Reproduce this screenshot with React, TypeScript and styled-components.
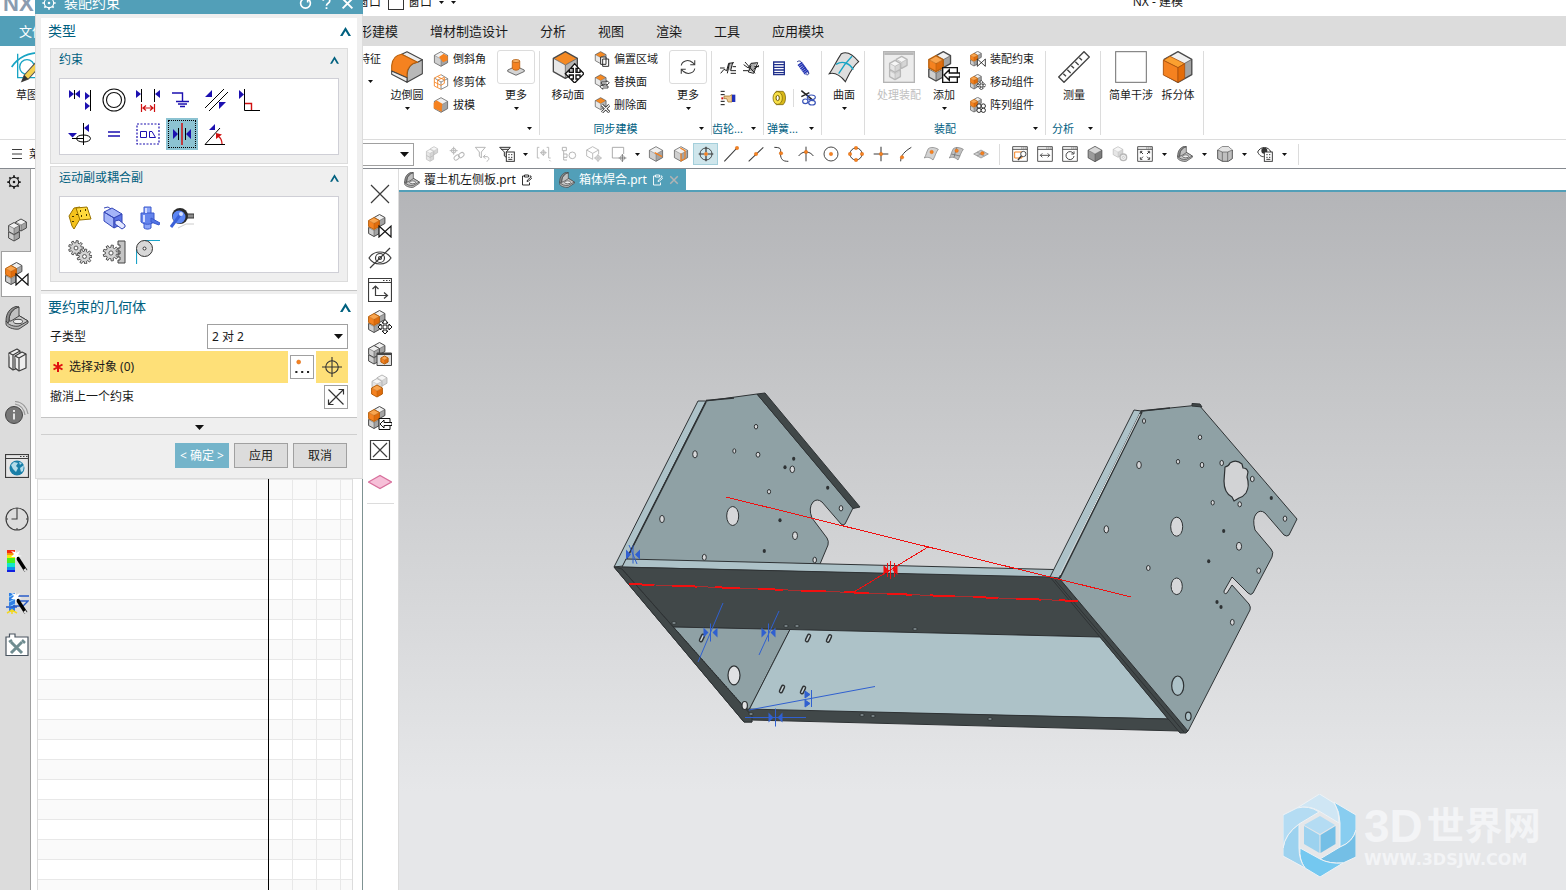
import React from 'react';
import styled, { createGlobalStyle, css } from 'styled-components';

const c = {
  teal: '#529fb8',
  tealText: '#00607f',
  bar: '#dcdcdc',
  panel: '#efefef',
  line: '#dcdcdc',
  ink: '#1a1a1a',
  icon: '#3c3c3c',
  navy: '#1c10b0',
  orange: '#f58220',
  yellow: '#fee078',
  border: '#a0a0a0',
};

const Global = createGlobalStyle`
  *, *::before, *::after { box-sizing: border-box; }
  body {
    margin: 0;
    overflow: hidden;
    background: #fff;
    color: ${c.ink};
    font-family: "Noto Sans", "Noto Sans CJK SC", sans-serif;
    font-size: 12px;
    line-height: 16px;
  }
  button, select { font: inherit; color: inherit; }
  button { padding: 0; border: 0; background: none; white-space: nowrap; }
  svg { display: block; flex: none; }
`;

/* ------------------------------------------------------------------ icons */

type CubeProps = { x: number; y: number; r: number; tone?: 'gray' | 'orange' | 'pale' | 'cap' | 'dark' };

const tones = {
  gray: ['#f0f0f0', '#cfcfcf', '#a4a4a4', '#4a4a4a'],
  orange: ['#f9a54f', '#f58220', '#e06c0c', '#b8600c'],
  cap: ['#f58a24', '#e8e8e8', '#b4b4b4', '#4a4a4a'],
  pale: ['#f6f6f6', '#e6e6e6', '#d6d6d6', '#b8b8b8'],
  dark: ['#d8d8d8', '#9c9c9c', '#7c7c7c', '#333'],
};

const Cube = ({ x, y, r, tone = 'gray' }: CubeProps) => {
  const w = r * 0.9;
  const h = r / 2;
  const [top, left, right, edge] = tones[tone];
  return (
    <g strokeLinejoin="round">
      <path fill={top} d={`M${x} ${y - r}L${x + w} ${y - h}L${x} ${y}L${x - w} ${y - h}Z`} />
      <path fill={left} d={`M${x - w} ${y - h}L${x} ${y}V${y + r}L${x - w} ${y + h}Z`} />
      <path fill={right} d={`M${x + w} ${y - h}L${x} ${y}V${y + r}L${x + w} ${y + h}Z`} />
      <path
        fill="none"
        stroke={edge}
        strokeWidth={0.5}
        d={`M${x - w} ${y - h}L${x} ${y}L${x + w} ${y - h}M${x} ${y}V${y + r}`}
      />
      <path
        fill="none"
        stroke={edge}
        strokeWidth={1}
        d={`M${x} ${y - r}L${x + w} ${y - h}V${y + h}L${x} ${y + r}L${x - w} ${y + h}V${y - h}Z`}
      />
    </g>
  );
};

const gearPath = (cx: number, cy: number, ro: number, ri: number, n: number) => {
  const pts: string[] = [];
  const step = (Math.PI * 2) / n;
  for (let i = 0; i < n; i += 1) {
    [[-0.3, ri], [-0.2, ro], [0.2, ro], [0.3, ri]].forEach(([k, r]) => {
      const a = (i + k) * step;
      pts.push(`${(cx + Math.cos(a) * r).toFixed(2)} ${(cy + Math.sin(a) * r).toFixed(2)}`);
    });
  }
  return `M${pts.join('L')}Z`;
};

const Gear = ({ x, y, r, n = 9 }: { x: number; y: number; r: number; n?: number }) => (
  <g stroke="#555" strokeWidth={1}>
    <path fill="#d4d4d4" d={gearPath(x, y, r, r * 0.7, n)} />
    <circle cx={x} cy={y} r={r * 0.26} fill="#fff" />
  </g>
);

const Assembly = () => (
  <>
    <Cube x={11.5} y={6.5} r={6} />
    <Cube x={6} y={16.5} r={6} />
    <Cube x={6} y={9.5} r={6} tone="orange" />
  </>
);

const Cross4 = () => (
  <path
    d="M17 9.5l3 3.5h-2v3h3v-2l3 3-3 3v-2h-3v3h2l-3 3-3-3h2v-3h-3v2l-3-3 3-3v2h3v-3h-2z"
    fill="#fff"
    stroke="#111"
    strokeWidth={1}
  />
);

const Dot = ({ x, y, r = 2.6 }: { x: number; y: number; r?: number }) => (
  <circle cx={x} cy={y} r={r} fill={c.orange} stroke="#d8660c" strokeWidth={0.6} />
);

const WindowFrame = () => (
  <path d="M1 1H23V23H1ZM1 5H23M14 3h1.5M17 3h1.5M20 3h1.5" fill="none" stroke={c.icon} strokeWidth={1.3} />
);

const Shoe = () => (
  <g stroke="#444" strokeWidth={1} strokeLinejoin="round">
    <path fill="#b4b4b4" d="M1 15L13 9L23 15V17L14 23C9 24 1 21 1 18Z" />
    <path fill="#c8c8c8" d="M1 15L13 9L23 15L14 20C9 21 3 19 1 15Z" />
    <path fill="#c0c0c0" d="M4 15C4 8 7 3 14 1V10L6 15Z" />
    <path fill="#8c8c8c" d="M1 15C1 7 5 2 11 0.500L14 1C7 3 4 8 4 15L3 17Z" />
    <ellipse cx={13} cy={15.5} rx={4.5} ry={2.2} fill="#eee" />
  </g>
);

const Sheet = ({ tone = '#d2d2d2' }: { tone?: string }) => (
  <path d="M2 18C5 13 5 9 8 4C12 1 18 2 23 5C19 10 19 14 15 21C11 17 6 16 2 18Z" fill={tone} stroke="#777" strokeWidth={1} />
);

const Wand = () => (
  <>
    <path d="M12 8L21 22" stroke="#000" strokeWidth={3.4} />
    <path d="M19.5 20L21 22.5" stroke="#ddd" strokeWidth={2.5} />
    <path d="M10 0l1 4 4-2-2 4 4 1-5 1-1 4-1-4-4 0 3-3-3-3 4 1z" fill="#fff" />
  </>
);

const icons: Record<string, React.ReactNode> = {
  touch: (
    <g fill={c.navy}>
      <path d="M1 2V10L6 6ZM12 2V10L7 6Z" />
      <path d="M17 4V12L22 8ZM17 14V22L22 18Z" />
      <path d="M6.5 2V11M22.5 2V23" stroke="#000" strokeWidth={1} />
    </g>
  ),
  concentric: (
    <g fill="none" stroke="#111" strokeWidth={1.1}>
      <circle cx={12} cy={12} r={11} />
      <circle cx={12} cy={12} r={7.5} />
    </g>
  ),
  distance: (
    <>
      <path d="M0 2V10L5 6ZM24 2V10L19 6Z" fill={c.navy} />
      <path d="M5.5 1V14M18.5 1V14" stroke="#000" />
      <path d="M5.5 16V24M18.500 16V24M7 20H17M10 17.5L7 20L10 22.5M14 17.5L17 20L14 22.5" stroke="#d01010" fill="none" strokeWidth={1.2} />
    </>
  ),
  ground: (
    <>
      <path d="M2 5H12.5V13" fill="none" stroke={c.navy} strokeWidth={1.4} />
      <path d="M6 13.5H19M8 16H17M10 18.5H15" stroke={c.navy} strokeWidth={1.5} />
    </>
  ),
  parallel: (
    <>
      <path d="M1 20L20 1M5 23L24 4" stroke="#000" />
      <path d="M1 9H8V2ZM15 14H22L15 21Z" fill={c.navy} />
    </>
  ),
  perpendicular: (
    <>
      <path d="M1 2V11L6 6.5Z" fill={c.navy} />
      <path d="M7 15.5H13.5V22" fill="none" stroke="#d01010" strokeWidth={1.4} />
      <path d="M6.5 1V22.5H22" fill="none" stroke="#000" />
    </>
  ),
  align: (
    <>
      <path d="M0 11H9L4.5 15.5ZM16 6L21 2V10Z" fill={c.navy} />
      <path d="M15.5 1V23M4 16.5H16" stroke="#000" />
      <ellipse cx={15.5} cy={16.5} rx={7} ry={3.5} fill="none" stroke="#000" />
    </>
  ),
  equal: <path d="M6 10H18M6 14H18" stroke={c.navy} strokeWidth={1.5} />,
  fit: (
    <g fill="none" stroke={c.navy}>
      <path d="M1 2H23V22H1Z" strokeDasharray="2 1.5" strokeWidth={1.2} />
      <path d="M4.5 9.5H10.5V15.5H4.5ZM13.5 15.5V9.5H16L19.5 15.5Z" />
    </g>
  ),
  center: (
    <>
      <path d="M3 7V17L8 12ZM21 7V17L16 12Z" fill={c.navy} />
      <path d="M8.5 6V18M15.500 6V18" stroke="#000" />
      <path d="M12 1V23" stroke="#d01010" strokeWidth={1.5} />
    </>
  ),
  angle: (
    <>
      <path d="M5 8H11V2Z" fill={c.navy} />
      <path d="M16 6L1 22.5H21" fill="none" stroke="#000" />
      <path d="M14 14C17 16 18 18 18 22" fill="none" stroke="#d01010" strokeWidth={1.3} />
      <path d="M12 17V11L18 12.5Z" fill="#d01010" />
    </>
  ),
  hinge: (
    <g stroke="#9a7400" strokeWidth={1}>
      <path d="M1 10L6 2L12 1V13L6 23L4 20Z" fill="#f4c21c" />
      <path d="M8 2L19 1L23 13L12 14Z" fill="#ffda3c" />
      <path d="M12 5h1M17 4h1M13 10h1M18 9h1M5 10v1M5 15v1M9 8v1" stroke="#4a3a00" strokeWidth={2} />
    </g>
  ),
  slider: (
    <g stroke="#3446b8" strokeWidth={1} strokeLinejoin="round">
      <path d="M2 6L10 2L20 8L12 12ZM2 6V15L12 22V12Z" fill="#a4b4f8" />
      <path d="M2 2L6 1L9 3" fill="none" />
      <path d="M12 12L20 8V18L12 22Z" fill="#5c74e4" />
      <path d="M13 15L17 14L23 19V21L20 23L13 18Z" fill="#e4e8ff" />
    </g>
  ),
  cylindrical: (
    <g stroke="#3a58cc" strokeWidth={1}>
      <path d="M8 1H15V22C13 23.5 10 23.5 8 22Z" fill="#8aa4f8" />
      <path d="M5 7H18V16C14 19 9 19 5 16Z" fill="#6484ec" />
      <path d="M15 12L24 17L23 19L15 16Z" fill="#5274e4" />
      <path d="M10 2V7M8 9V16" stroke="#d4dcff" strokeWidth={2} />
    </g>
  ),
  ball: (
    <>
      <path d="M14 8H24V12H14Z" fill="#8c8c8c" stroke="#333" />
      <circle cx={10} cy={10} r={8} fill="#2a2a2a" />
      <circle cx={9} cy={11} r={6.5} fill="#5c86f4" />
      <path d="M1 21L10 9" stroke="#3a60d8" strokeWidth={3} />
      <circle cx={11} cy={8} r={2} fill="#d4e0ff" />
      <path d="M8 22L16 18H24" stroke="#ccc" fill="none" />
    </>
  ),
  gears: (
    <>
      <Gear x={8} y={8} r={7.5} />
      <Gear x={16.5} y={16.5} r={7.5} />
    </>
  ),
  rack: (
    <>
      <Gear x={9} y={13} r={8} />
      <path d="M18 1H23V23H16V20H18V17H16V14H18V11H16V8H18V5H16V1Z" fill="#c4c4c4" stroke="#444" />
    </>
  ),
  pulley: (
    <>
      <path d="M0.5 24V9M8 0.5H24" stroke="#1aa3c8" strokeWidth={1.2} />
      <circle cx={8.5} cy={8.5} r={8} fill="#d8d8d8" stroke="#333" />
      <circle cx={8.5} cy={8.5} r={1.5} fill="#fff" stroke="#333" />
    </>
  ),
  gearOutline: (
    <g fill="none" stroke="currentColor" strokeWidth={2}>
      <circle cx={12} cy={12} r={8} />
      <circle cx={12} cy={12} r={1.2} />
      <path
        d="M12 0.500V4M12 20V23.500M0.500 12H4M20 12H23.500M4 4L6.300 6.300M17.700 17.700L20 20M20 4L17.700 6.300M6.300 17.700L4 20"
        strokeWidth={3}
      />
    </g>
  ),
  partsGray: (
    <>
      <Cube x={16} y={7} r={6} />
      <Cube x={9} y={17} r={6} />
      <Cube x={9} y={10.5} r={6} />
    </>
  ),
  assembly: <Assembly />,
  assemblyPale: (
    <>
      <rect x={0.5} y={0.5} width={23} height={23} fill="#ececec" stroke="#b4b4b4" strokeWidth={1} />
      <path d="M1 1H23V3H1Z" fill="#b8b8b8" />
      <Cube x={14} y={8.5} r={4.5} tone="pale" />
      <Cube x={9} y={17} r={4.5} tone="pale" />
      <Cube x={9} y={11.5} r={4.5} tone="pale" />
    </>
  ),
  assemblyConstraint: (
    <>
      <Assembly />
      <path d="M11 12L23 23V12L11 23Z" fill="#fff" stroke="#111" strokeWidth={1.2} />
    </>
  ),
  assemblyMove: (
    <>
      <Assembly />
      <Cross4 />
    </>
  ),
  assemblyAdd: (
    <>
      <Assembly />
      <path d="M11 12.5H22V23.5H11Z" fill="#fff" stroke="#111" />
      <path d="M12 18L16 14V16.5H24V19.5H16V22Z" fill="#fff" stroke="#111" />
    </>
  ),
  assemblyPattern: (
    <>
      <Assembly />
      <g fill="#fff" stroke="#111" strokeWidth={1.3}>
        <circle cx={13.5} cy={13.5} r={3.2} />
        <circle cx={20} cy={13.5} r={3.2} />
        <circle cx={13.5} cy={20} r={3.2} />
        <circle cx={20} cy={20} r={3.2} />
      </g>
    </>
  ),
  assemblyWindow: (
    <>
      <Cube x={11.5} y={6.5} r={6} />
      <Cube x={6} y={16} r={6} />
      <Cube x={6} y={9.5} r={6} />
      <path d="M9 11H23.5V23.5H9Z" fill="#ddd" stroke="#444" />
      <path d="M9 12H23" stroke="#444" strokeWidth={2} />
      <Cube x={16.5} y={18} r={4} tone="orange" />
    </>
  ),
  assemblyHide: (
    <>
      <Cube x={14} y={6.5} r={5.5} tone="pale" />
      <Cube x={9} y={10} r={5.5} tone="pale" />
      <Cube x={9} y={17} r={6} tone="orange" />
    </>
  ),
  shoe: <Shoe />,
  books: (
    <g fill="#eee" stroke={c.icon} strokeWidth={1.2} strokeLinejoin="round">
      <path d="M4 5L12 1L15 3V19L8 22L4 19Z" />
      <path d="M4 5L8 7V22M8 7L15 3" />
      <path d="M10 8L17 4L21 6V20L14 23L10 20Z" />
      <path d="M10 8L14 10V23M14 10L21 6" />
    </g>
  ),
  info: (
    <>
      <circle cx={9} cy={14} r={8.5} fill="#777" stroke="#444" />
      <path d="M9 12.5V18.5M9 9V11" stroke="#fff" strokeWidth={1.6} />
      <path d="M10 3C16 4 19 8 20 14M10 0.500C18 1 22 7 23 13" fill="none" stroke="#999" strokeWidth={1.2} />
    </>
  ),
  web: (
    <>
      <rect x={0.5} y={0.5} width={23} height={23} fill="#e6e6e6" stroke={c.icon} strokeWidth={1.2} />
      <path d="M1 4.5H23M15 2.5h1.5M18 2.5h1.5M21 2.5h1.5" stroke={c.icon} />
      <circle cx={12} cy={14} r={7.5} fill="#1a7fa8" />
      <path d="M6 11L9 8L13 9L11 12L13 14L11 18L8 15ZM15 14L19 11L18 17L16 18ZM14 8L17 9L15 11Z" fill="#b4dcea" />
    </>
  ),
  clock: (
    <g fill="none" stroke={c.icon} strokeWidth={1.1}>
      <circle cx={12} cy={12} r={11} />
      <path d="M12 3V12H6.500M12 1V3M12 21V23M1 12H3M21 12H23" />
    </g>
  ),
  rainbow: (
    <>
      <path d="M2 1H10V4H2Z" fill="#f42c10" />
      <path d="M2 4H10V6H2Z" fill="#f89010" />
      <path d="M2 6H10V9H2Z" fill="#f4ec10" />
      <path d="M2 9H10V14H2Z" fill="#48f020" />
      <path d="M2 14H10V18H2Z" fill="#10e8c8" />
      <path d="M2 18H10V21H2Z" fill="#1090f0" />
      <path d="M2 21H10V23H2Z" fill="#1020e0" />
      <Wand />
    </>
  ),
  spark: (
    <>
      <path d="M4 2H10V20H4Z" fill="#2f7fe4" />
      <path d="M4 6L10 3M4 11L10 8M4 16L10 13" stroke="#9cd4ff" />
      <path d="M12 5H24M12 10H23L18 15H8M1 16H12" stroke="#2a5cc8" fill="none" strokeWidth={1.3} />
      <path d="M2 22L7 19L12 22M7 18V23" stroke="#f4d820" strokeWidth={1.5} fill="none" />
      <Wand />
    </>
  ),
  toolbox: (
    <>
      <path d="M1 4H4.500V1H10V4H23V22.500H1Z" fill="#fff" stroke="#4a5560" strokeWidth={1.2} />
      <path d="M6 9L17 20M17 9L6 20" stroke="#6f8c90" strokeWidth={3} />
      <path d="M4 9L7 7M17 7L20 10" stroke="#6f8c90" strokeWidth={2.5} />
    </>
  ),
  close: <path d="M3 3L21 21M21 3L3 21" stroke={c.icon} strokeWidth={1.2} />,
  eyeOff: (
    <g fill="none" stroke={c.icon} strokeWidth={1.2}>
      <path d="M1 12C6 4 18 4 23 12C18 20 6 20 1 12Z" />
      <circle cx={12} cy={12} r={4.5} />
      <circle cx={12} cy={12} r={1.5} />
      <path d="M2 22L22 2" />
    </g>
  ),
  axes: (
    <g fill="none" stroke={c.icon} strokeWidth={1.2}>
      <path d="M0.5 0.5H23.5V23.5H0.5ZM0.5 4.5H23.5M15 2.5h1.5M18 2.5h1.5M21 2.5h1.5" />
      <path d="M7.5 8V17.5H19M4.5 11L7.5 8L10.5 11M16 14.5L19.5 17.5L16 20.5" />
    </g>
  ),
  boxX: <path d="M2.5 2.5H21.5V21.5H2.5ZM5 5L19 19M19 5L5 19" fill="none" stroke={c.icon} strokeWidth={1.2} />,
  plane: <path d="M0.5 12L12 5.5L23.5 12L12 18.5Z" fill="#f6c0d8" stroke="#d8709c" strokeWidth={1.2} />,
  edgeBlend: (
    <g stroke="#444" strokeWidth={0.8} strokeLinejoin="round">
      <path fill="#ececec" d="M8 2.5L12 0.5L23.5 6.5L20 9Z" />
      <path fill="#b8b8b8" d="M23.5 6.5V17L12 23.5V18C12 13 15 9 20 8.500Z" />
      <path fill="#f58220" stroke="#b8600c" d="M0.5 15V11C1 6 4 3 8 2.5L20 8.500C15 9 12 13 12 17V20Z" />
      <path fill="#ececec" d="M0.5 15V17.500L12 23.5V20Z" />
    </g>
  ),
  chamfer: (
    <>
      <Cube x={12} y={12} r={11} />
      <path d="M9 9L16 4L22 8V14L15 17Z" fill={c.orange} />
    </>
  ),
  trim: (
    <g fill="none" strokeWidth={1.3}>
      <path d="M12 1L22 7V18L12 23V12L22 7M12 12L2 6" stroke="#777" />
      <path d="M2 6L12 1M2 6V18L12 23M2 12L12 17L17 14V5L7 9V20M7 4L17 9" stroke={c.orange} />
    </g>
  ),
  draft: (
    <>
      <Cube x={12} y={12} r={11} />
      <path d="M1 9L5 5L14 10L13 22L1 17Z" fill={c.orange} />
    </>
  ),
  boss: (
    <>
      <path d="M1 16L12 11L23 16V18L12 23L1 18Z" fill="#d4d4d4" stroke="#444" />
      <path d="M7 4V14C9 17 15 17 17 14V4Z" fill={c.orange} stroke="#b05808" />
      <ellipse cx={12} cy={4} rx={5} ry={2} fill="#fbb468" stroke="#b05808" />
    </>
  ),
  moveFace: (
    <>
      <Cube x={10} y={10.5} r={10} tone="cap" />
      <Cross4 />
    </>
  ),
  offsetFace: (
    <>
      <Cube x={10} y={10} r={9} tone="cap" />
      <path d="M10 9H18V20H10ZM13 12H22V23H13Z" fill="#fff" stroke="#222" strokeWidth={1.4} />
    </>
  ),
  replaceFace: (
    <>
      <Cube x={10} y={10} r={9} tone="cap" />
      <path d="M23 13L19 10V12H11V15H19V17ZM9 19L13 16V18H21V21H13V23Z" fill="#fff" stroke="#222" strokeWidth={1.2} />
    </>
  ),
  deleteFace: (
    <>
      <Cube x={10} y={10} r={9} tone="cap" />
      <path d="M12 12L23 23M23 12L12 23" stroke="#222" strokeWidth={4} />
      <path d="M12 12L23 23M23 12L12 23" stroke="#fff" strokeWidth={1.8} />
    </>
  ),
  refresh: (
    <path d="M3 10C4 4 12 1 18 6L21 9M21 3V9H15M21 14C20 20 12 23 6 18L3 15M3 21V15H9" fill="none" stroke={c.icon} strokeWidth={1.4} />
  ),
  gearPairA: (
    <>
      <path d="M10 16L13 5L19 4L16 15Z" fill="#bbb" />
      <path d="M0 12H7M1 20L6 14L10 16L13 5L21 4M14 5L11 20M19 4L16 16H24M16 20H24M19 10H24" fill="none" stroke="#111" strokeWidth={1.4} />
    </>
  ),
  gearPairB: (
    <>
      <path d="M8 16L12 5L20 4L16 18Z" fill="#aaa" />
      <path d="M1 7L8 12L12 5L22 4L16 20L8 18L12 8M0 16H8M16 14L24 8M3 3L18 20M17 10H24" fill="none" stroke="#111" strokeWidth={1.4} />
    </>
  ),
  gearList: (
    <>
      <path d="M1 2H7M1 7H7M1 17H7M1 22H7" stroke="#111" strokeWidth={1.5} />
      <path d="M2 11H5V14H2Z" fill="#d01010" />
      <path d="M6 9H14L18 7V18H12L10 13H6Z" fill="#ecc890" stroke="#94681c" />
      <path d="M18 7H23V18H18Z" fill="#2030b8" />
    </>
  ),
  springA: <path d="M3 3H21M3 7H21M3 11H21M3 15H21M3 19H21M3 22H21M4 2V23M20 2V23" stroke="#20308c" strokeWidth={1.9} />,
  springB: (
    <>
      <path d="M3 3C6 0 10 2 10 5L20 18C22 20 20 23 17 22" stroke="#20308c" strokeWidth={1.5} fill="none" />
      <path d="M7 5L18 20" stroke="#2334b4" strokeWidth={8} strokeDasharray="2.4 0.6" />
    </>
  ),
  springC: (
    <>
      <path d="M8 2H18C23 5 23 19 18 22H8C3 19 3 5 8 2Z" fill="#d8b818" stroke="#6c5800" />
      <ellipse cx={10} cy={12} rx={7} ry={9.5} fill="#f8e048" stroke="#6c5800" />
      <ellipse cx={10} cy={12} rx={2.5} ry={4} fill="#fff" stroke="#6c5800" strokeWidth={1.5} />
    </>
  ),
  springD: (
    <>
      <path d="M2 1L20 16M2 10L14 4" stroke="#222" strokeWidth={2.2} />
      <g fill="none" stroke="#3a54b8" strokeWidth={1.8}>
        <ellipse cx={17} cy={11} rx={6} ry={3.5} />
        <ellipse cx={8} cy={17} rx={4} ry={3.5} />
        <ellipse cx={18} cy={19} rx={5} ry={3.5} />
      </g>
    </>
  ),
  surface: (
    <>
      <path d="M1 17C4 13 6 8 10 2C14 0 19 3 23 8C18 12 16 17 13 23C9 18 5 16 1 17Z" fill="#dedede" stroke="#333" strokeWidth={0.8} />
      <path d="M8 17C11 12 14 8 18 4M6 10C11 7 16 9 19 14" fill="none" stroke="#18a4c4" strokeWidth={1} />
    </>
  ),
  measure: (
    <>
      <path d="M0.5 19.5L19.5 0.5L23.5 4.5L4.5 23.5Z" fill="#fff" stroke="#444" strokeWidth={1} />
      <path d="M4 17L6 19M7 14L9.5 16.5M10 11L12 13M13 8L15.5 10.5M16 5L18 7" stroke="#444" strokeWidth={1} />
    </>
  ),
  emptyBox: <rect x={0.5} y={0.5} width={23} height={23} fill="#fff" stroke="#777" strokeWidth={0.8} />,
  split: (
    <>
      <Cube x={12} y={12} r={11.5} />
      <g stroke="#a8500c" strokeWidth={0.6} strokeLinejoin="round">
        <path d="M1 7L6 4L17 9.500L12 12.500Z" fill="#fba030" />
        <path d="M1 7L12 12.500V23.500L1 18Z" fill={c.orange} />
        <path d="M17 9.500V20.500L12 23.500V12.500Z" fill="#e46c08" />
      </g>
    </>
  ),
  sketch: (
    <>
      <path d="M0.5 12C5 5 12 1 24 1" fill="none" stroke="#18a4c4" strokeWidth={1.2} />
      <path d="M5 2V20H22" fill="none" stroke="#18a4c4" />
      <circle cx={12} cy={12} r={5.5} fill="none" stroke="#18a4c4" />
      <path d="M8 23L10 18L20 7L23 10L13 21Z" fill="#f4d050" stroke="#555" strokeWidth={0.8} />
      <path d="M8 23L10 18L13 21Z" fill="#333" />
    </>
  ),
  faded: (
    <>
      <Cube x={15} y={7} r={6} tone="pale" />
      <Cube x={9} y={17} r={6} tone="pale" />
      <Cube x={9} y={11} r={6} tone="pale" />
    </>
  ),
  link: (
    <g fill="none" stroke="#b8b8b8" strokeWidth={1.5}>
      <circle cx={7} cy={7} r={3.500} />
      <path d="M7 1V13M1 7H13" />
      <rect x={7} y={14} width={9} height={6} rx={3} transform="rotate(-40 12 17)" />
      <rect x={14} y={11} width={9} height={6} rx={3} transform="rotate(-40 18 14)" />
    </g>
  ),
  filterUndo: (
    <g fill="none" stroke="#b0b0b0" strokeWidth={1.4}>
      <path d="M2 2H17L11 9V18L8 15V9Z" />
      <path d="M14 16H20C24 18 22 22 19 23M17 13L14 16L17 19" />
    </g>
  ),
  filterList: (
    <g fill="none" stroke="#333" strokeWidth={1.5}>
      <path d="M1 2H17L11 9V17L8 15V9ZM3 5H15" />
      <rect x={11} y={9} width={12} height={14} fill="#fff" />
      <path d="M14 13H16M18 13H20M14 17H16M18 17H20M14 20H20" />
    </g>
  ),
  bracket: (
    <g fill="none" stroke="#b8b8b8" strokeWidth={1.4}>
      <path d="M5 2H2V18H5M16 2H19V18H22M11 5V15M6 10H16M20 21L22 23" />
      <circle cx={11} cy={10} r={3} />
    </g>
  ),
  tree: (
    <g fill="none" stroke="#b0b0b0" strokeWidth={1.4}>
      <path d="M2 2H8V7H2ZM4 7V21M4 12H9V17H4M4 21H9" />
      <circle cx={17} cy={14} r={5} />
    </g>
  ),
  cubeTarget: (
    <g fill="none" stroke="#b8b8b8" strokeWidth={1.4}>
      <path d="M10 1L19 6V12M10 1L1 6V15L10 20M1 6L10 11L19 6M10 11V20" />
      <circle cx={18} cy={18} r={3.500} />
      <path d="M18 12V24M12 18H24" />
    </g>
  ),
  rectTarget: (
    <g fill="none" stroke="#a0a0a0" strokeWidth={1.3}>
      <path d="M19 12V2H2V18H11" />
      <circle cx={17} cy={18} r={3.500} />
      <path d="M17 12V24M11 18H23" stroke="#666" />
    </g>
  ),
  cubeLine: (
    <>
      <Cube x={12} y={12} r={11} />
      <path d="M10 10L21 16" stroke={c.orange} strokeWidth={2} />
    </>
  ),
  cubePlane: (
    <>
      <Cube x={12} y={12} r={11} />
      <path d="M11 3L18 7V19L12 22V11" fill="none" stroke={c.orange} strokeWidth={1.8} />
    </>
  ),
  snap: (
    <g fill="none" stroke="#333" strokeWidth={1.3}>
      <circle cx={12} cy={12} r={9} />
      <path d="M12 1V9M12 15V23M1 12H9M15 12H23" strokeWidth={1.8} />
      <Dot x={12} y={12} />
    </g>
  ),
  endPoint: (
    <>
      <path d="M2 23L20 4" stroke={c.icon} strokeWidth={1.6} />
      <Dot x={21} y={3} />
    </>
  ),
  midPoint: (
    <>
      <path d="M1 23L23 2" stroke={c.icon} strokeWidth={1.6} />
      <Dot x={12} y={12} />
    </>
  ),
  control: (
    <>
      <path d="M2 2C16 2 10 8 11 12C12 20 14 23 23 23" fill="none" stroke={c.icon} strokeWidth={1.5} />
      <Dot x={12} y={11} />
    </>
  ),
  intersect: (
    <>
      <path d="M12 1V23M1 15C6 7 18 7 23 15" fill="none" stroke={c.icon} strokeWidth={1.5} />
      <Dot x={12} y={9} />
    </>
  ),
  arcCenter: (
    <>
      <circle cx={12} cy={12} r={10.5} fill="none" stroke={c.icon} strokeWidth={1.4} />
      <Dot x={12} y={12} />
    </>
  ),
  quadrant: (
    <>
      <circle cx={12} cy={12} r={9} fill="none" stroke={c.icon} strokeWidth={1.5} />
      <Dot x={12} y={3} />
      <Dot x={21} y={12} />
      <Dot x={12} y={21} />
      <Dot x={3} y={12} />
    </>
  ),
  point: (
    <>
      <path d="M12 1V23M1 12H23" stroke={c.icon} strokeWidth={1.6} />
      <Dot x={12} y={12} />
    </>
  ),
  onCurve: (
    <>
      <path d="M4 23C4 14 10 8 20 2" fill="none" stroke={c.icon} strokeWidth={1.5} />
      <Dot x={6} y={17} />
    </>
  ),
  onFace: (
    <>
      <Sheet />
      <Dot x={13} y={9} />
    </>
  ),
  boundary: (
    <>
      <Sheet tone="#c0c0c0" />
      <path d="M5 12L18 15M13 2L9 17" stroke="#666" fill="none" />
      <Dot x={13} y={7} />
    </>
  ),
  facet: (
    <>
      <path d="M1 12L12 6L23 12L12 18Z" fill="#c8c8c8" stroke="#888" />
      <path d="M6 9L17 15M17 9L6 15" stroke="#888" />
      <Dot x={14} y={11} />
    </>
  ),
  zoomWindow: (
    <>
      <WindowFrame />
      <path d="M4 9H15V18H4Z" fill="none" stroke={c.orange} strokeWidth={1.5} />
      <circle cx={17} cy={12} r={4} fill="#fff" stroke={c.icon} strokeWidth={1.3} />
      <path d="M14 15L9 21" stroke={c.icon} strokeWidth={2.2} />
    </>
  ),
  panWindow: (
    <>
      <WindowFrame />
      <path d="M5 14H19M8 11L5 14L8 17M16 11L19 14L16 17" fill="none" stroke={c.icon} strokeWidth={1.3} />
    </>
  ),
  rotateWindow: (
    <>
      <WindowFrame />
      <path d="M17 11A6 6 0 1 0 18 15M18 8V12H14" fill="none" stroke={c.icon} strokeWidth={1.4} />
    </>
  ),
  cubeDark: <Cube x={12} y={12} r={11.5} tone="dark" />,
  cubeGear: (
    <>
      <Cube x={9} y={9} r={8} tone="pale" />
      <circle cx={17} cy={17} r={5} fill="#eee" stroke="#b8b8b8" strokeWidth={2} />
      <circle cx={17} cy={17} r={1.5} fill="#fff" stroke="#b8b8b8" />
    </>
  ),
  fitWindow: (
    <>
      <WindowFrame />
      <path d="M5 11V8H8M16 8H19V11M19 17V20H16M8 20H5V17M6 9L9 12M18 9L15 12M18 19L15 16M6 19L9 16" fill="none" stroke={c.icon} strokeWidth={1.5} />
    </>
  ),
  prism: (
    <>
      <path d="M1 6L8 1H17L23 6V19L17 23H8L1 19Z" fill="#c0c0c0" stroke="#333" strokeWidth={1.2} />
      <path d="M1 6L8 1H17L23 6L16 9H8Z" fill="#e4e4e4" />
      <path d="M1 6L8 9H16L23 6M8 9V23M16 9V23" fill="none" stroke="#555" />
    </>
  ),
  eyeList: (
    <>
      <path d="M1 9C5 0 17 0 21 9M1 9C4 15 7 16 10 16" fill="none" stroke="#333" strokeWidth={1.5} />
      <circle cx={11} cy={7} r={4.500} fill="#333" />
      <rect x={11} y={9} width={12} height={14} fill="#fff" stroke="#333" strokeWidth={1.4} />
      <path d="M14 13H16M18 13H20M14 17H16M18 17H20M14 20H20" stroke="#333" strokeWidth={1.5} />
    </>
  ),
  note: (
    <path
      d="M7 4H3V22H17V17M17 4H20V7M7 2H15V6H7ZM12 15L13 12L19 7L21 9L15 14Z"
      fill="none"
      stroke="currentColor"
      strokeWidth={1.8}
    />
  ),
  target: (
    <g fill="none" stroke="#333" strokeWidth={1.3}>
      <circle cx={12} cy={12} r={7.5} />
      <path d="M12 0V24M0 12H24" />
    </g>
  ),
  pointDialog: (
    <>
      <Dot x={8} y={6} r={2.400} />
      <path d="M4 18h2.500M11 18h2.500M18 18h2.500" stroke="#222" strokeWidth={2.4} />
    </>
  ),
  reverse: <path d="M3 3L21 21M21 3L3 21M15 3H21V9M3 15V21H9" fill="none" stroke="#333" strokeWidth={1.4} />,
  asterisk: <path d="M12 2V22M3 7L21 17M21 7L3 17" stroke="#e01010" strokeWidth={4} />,
  reset: <path d="M7 4A9 9 0 1 0 17 4M16 10V4H22" fill="none" stroke="#fff" strokeWidth={3} />,
  help: <path d="M6 7C6 1 18 1 18 7C18 12 12 11 12 16M12 19V22" fill="none" stroke="#fff" strokeWidth={3.2} />,
  closeBold: <path d="M3 3L21 21M21 3L3 21" stroke="currentColor" strokeWidth={3.5} />,
  menu: <path d="M2 3H22M2 12H22M2 21H22" stroke={c.icon} strokeWidth={2} />,
};

const Icon = ({ name, size = 16 }: { name: string; size?: number }) => (
  <svg width={size} height={size} viewBox="0 0 24 24" fill="none" aria-hidden="true">{icons[name]}</svg>
);

const Caret = ({ big = false }: { big?: boolean }) => (
  <svg width={big ? 9 : 5} height={big ? 5 : 3} viewBox="0 0 8 4" preserveAspectRatio="none" aria-hidden="true">
    <path d="M0 0H8L4 4Z" fill="#111" />
  </svg>
);

const Chevron = ({ small = false }: { small?: boolean }) => (
  <svg width={small ? 9 : 11} height={small ? 8 : 9} viewBox="0 0 11 9" aria-hidden="true">
    <path d="M0 9L5.500 0L11 9H8.500L5.500 4L2.500 9Z" fill={c.tealText} />
  </svg>
);

/* ------------------------------------------------------------------ shell */

const Shell = styled.div`
  position: relative;
  display: flex;
  flex-direction: column;
  height: 100vh;
  overflow: hidden;
`;

const TitleBar = styled.header`
  display: flex;
  flex: none;
  align-items: center;
  justify-content: space-between;
  height: 28px;
  margin-top: -12px;
  padding: 0 383px 0 3px;
`;

const Brand = styled.span`
  align-self: flex-end;
  width: 354px;
  color: #8a9cb0;
  font: bold 22px/24px "Liberation Sans", sans-serif;
`;

const QuickAccess = styled.div`
  display: flex;
  flex: 1;
  align-items: center;
  gap: 7px;
`;

const WindowBox = styled.span`
  width: 16px;
  height: 16px;
  margin-right: -3px;
  border: 1px solid #333;
`;

const TabBar = styled.nav`
  display: flex;
  flex: none;
  height: 30px;
  background: ${c.bar};
  font-size: 13px;
`;

const FileTab = styled.button`
  width: 64px;
  margin-right: 279px;
  background: ${c.teal};
  color: #fff;
`;

const RibbonTab = styled.button`
  padding: 0 16px;
`;

const Ribbon = styled.section`
  display: flex;
  flex: none;
  height: 94px;
  padding: 5px 0 4px;
  border-bottom: 1px solid ${c.line};
  font-size: 11px;
`;

const RibbonStart = styled.div`
  flex: none;
  width: 356px;
`;

const Group = styled.div<{ $w: number }>`
  display: flex;
  flex: none;
  flex-direction: column;
  justify-content: space-between;
  width: ${(p) => p.$w}px;
  border-right: 1px solid ${c.line};
`;

const GroupBody = styled.div<{ $pad?: number }>`
  display: flex;
  gap: 6px;
  padding-left: ${(p) => p.$pad ?? 0}px;
`;

const GroupFoot = styled.div`
  display: flex;
  align-items: center;
  height: 13px;
  color: ${c.tealText};
  text-align: center;
  white-space: nowrap;
  & > span { flex: 1; }
  & > button {
    display: flex;
    align-items: center;
    justify-content: center;
    width: 20px;
    height: 13px;
  }
`;

const BigButton = styled.button<{ $w: number; $dim?: boolean }>`
  display: flex;
  flex: none;
  flex-direction: column;
  align-items: center;
  gap: 4px;
  width: ${(p) => p.$w}px;
  color: ${(p) => (p.$dim ? '#c0c0c0' : 'inherit')};
`;

const TextButton = styled(BigButton)`
  gap: 13px;
`;

const MoreFace = styled.span`
  display: flex;
  align-items: center;
  justify-content: center;
  width: 38px;
  height: 34px;
  margin: -1px 0 -1px;
  border: 1px solid ${c.line};
  border-radius: 3px;
`;

const SmallStack = styled.div`
  display: flex;
  flex-direction: column;
  gap: 7px;
  margin: 0 5px 0 3px;
`;

const SmallButton = styled.button`
  display: flex;
  align-items: center;
  gap: 4px;
  height: 16px;
`;

const IconGrid = styled.div<{ $col: number }>`
  display: grid;
  grid-template-columns: repeat(2, ${(p) => p.$col}px);
  grid-auto-rows: 30px;
  padding-top: 2px;
`;

const GridButton = styled.button<{ $rule?: boolean }>`
  display: flex;
  align-items: center;
  justify-content: center;
  ${(p) => p.$rule && css`
    height: 18px;
    margin: 6px 0 0 2px;
    padding-left: 6px;
    border-left: 1px solid ${c.line};
  `}
`;

const SelectionBar = styled.section`
  display: flex;
  flex: none;
  align-items: center;
  height: 29px;
  border-bottom: 1px solid #85898f;
  font-size: 11px;
`;

const MenuButton = styled.button`
  display: flex;
  align-items: center;
  gap: 6px;
  width: 183px;
  padding-left: 11px;
`;

const FilterBox = styled.span`
  display: flex;
  position: relative;
  width: 231px;
  margin-right: 5px;
  align-items: center;
  & > svg { position: absolute; right: 5px; pointer-events: none; }
`;

const Select = styled.select<{ $h: number }>`
  width: 100%;
  height: ${(p) => p.$h}px;
  padding: 0 4px;
  border: 1px solid ${c.border};
  border-radius: 0;
  background: #fff;
  appearance: none;
`;

const ToolButton = styled.button<{ $on?: boolean }>`
  display: flex;
  flex: none;
  align-items: center;
  justify-content: center;
  width: 25px;
  height: 22px;
  ${(p) => p.$on && css`
    background: #cfe6ec;
    outline: 1px solid #a4cfdb;
    outline-offset: -1px;
  `}
`;

const CaretButton = styled.button<{ $wide?: boolean }>`
  display: flex;
  justify-content: center;
  width: ${(p) => (p.$wide ? 15 : 12)}px;
`;

const BarRule = styled.i`
  width: 1px;
  height: 21px;
  margin: 0 7px 0 6px;
  background: ${c.line};
`;

const Body = styled.div`
  display: flex;
  flex: 1;
  min-height: 0;
`;

const Rail = styled.nav`
  display: flex;
  flex: none;
  flex-direction: column;
  width: 31px;
  border-right: 1px solid ${c.border};
  background: ${c.bar};
`;

const RailButton = styled.button<{ $on?: boolean; $gap?: boolean }>`
  display: flex;
  align-items: center;
  justify-content: center;
  height: 42px;
  margin-top: ${(p) => (p.$gap ? 11 : 0)}px;
  padding-left: 3px;
  ${(p) => p.$on && css`
    height: 46px;
    margin: 0 -1px 0 1px;
    padding-left: 1px;
    border: 1px solid ${c.border};
    border-right: 0;
    background: #fff;
  `}
`;

const RailHead = styled.button`
  display: flex;
  justify-content: center;
  height: 27px;
  margin-bottom: 13px;
  padding: 6px 2px 0 0;
`;

const Navigator = styled.div`
  flex: none;
  width: 332px;
  padding: 0 9px 0 6px;
  border-right: 1px solid #7f9292;
`;

const RowGrid = styled.div`
  display: grid;
  grid-template-columns: 229px 1px 24px 24px 24px 1fr;
  height: 100%;
  padding-left: 1px;
  border: solid ${c.line};
  border-width: 0 1px;
  background: repeating-linear-gradient(#fafafa 0 10px, #e8e8e8 10px 11px, #fff 11px 30px, #e8e8e8 30px 31px, #fafafa 31px 40px);
  & > i { border-right: 1px solid #e8e8e8; }
  & > i:first-child, & > i:last-child { border: 0; }
  & > i:nth-child(2) { border-color: #000; }
`;

const ToolColumn = styled.div`
  display: flex;
  flex: none;
  flex-direction: column;
  width: 36px;
  padding: 9px 1px 0 0;
  border-right: 1px solid ${c.line};
`;

const ColumnButton = styled.button`
  display: flex;
  align-items: center;
  justify-content: center;
  height: 32px;
`;

const ColumnRule = styled.hr`
  width: 27px;
  height: 1px;
  margin: 5px 0 0 4px;
  border: 0;
  background: ${c.line};
`;

const Main = styled.main`
  display: flex;
  flex: 1;
  flex-direction: column;
  min-width: 0;
`;

const DocTabs = styled.div`
  display: flex;
  flex: none;
  height: 23px;
  border-bottom: 2px solid ${c.teal};
`;

const DocTab = styled.div<{ $on?: boolean }>`
  display: flex;
  align-items: center;
  width: ${(p) => (p.$on ? 132 : 155)}px;
  padding-left: 5px;
  gap: 5px;
  background: ${(p) => (p.$on ? c.teal : '#fff')};
  color: ${(p) => (p.$on ? '#fff' : c.ink)};
  & > span { margin-left: -1px; }
  & > button { color: #b4b4b4; }
`;

const Viewport = styled.div`
  position: relative;
  flex: 1;
  min-height: 0;
  background: linear-gradient(#b4b5b8, #c5c6c8 28%, #e6e7e9 86%);
`;

const Scene = styled.svg`
  width: 100%;
  height: 100%;
`;

const Watermark = styled.div`
  position: absolute;
  right: 24px;
  bottom: 13px;
  display: flex;
  align-items: center;
  gap: 8px;
  color: #f3f4f6;
`;

const MarkText = styled.div`
  width: 178px;
  white-space: nowrap;
`;

const MarkName = styled.div`
  display: flex;
  align-items: flex-start;
  gap: 4px;
  height: 48px;
  font: bold 46px/44px "Liberation Sans", sans-serif;
  & > span { font: bold 38px/38px "Noto Sans CJK SC", sans-serif; }
`;

const MarkUrl = styled.div`
  font: bold 16px/16px "DejaVu Sans", sans-serif;
`;

/* ----------------------------------------------------------------- dialog */

const Dialog = styled.section`
  position: absolute;
  top: -8px;
  left: 35px;
  width: 328px;
  padding-bottom: 10px;
  border: solid ${c.line};
  border-width: 0 1px 1px;
  background: ${c.panel};
`;

const DialogHead = styled.header`
  display: flex;
  align-items: center;
  gap: 8px;
  height: 22px;
  margin: 0 -1px 4px;
  padding: 0 9px 0 7px;
  background: ${c.teal};
  color: #fff;
  font-size: 14px;
  & > span { flex: 1; }
`;

const Section = styled.div`
  margin: 0 5px 3px;
  padding: 0 9px 8px;
  border-bottom: 1px solid #c4c4c4;
  background: #fff;
`;

const SectionHead = styled.button`
  display: flex;
  align-items: center;
  justify-content: space-between;
  width: 303px;
  height: 26px;
  margin: 0 -2px 4px;
  color: ${c.tealText};
  font-size: 14px;
`;

const SubPanel = styled.div`
  margin-bottom: 2px;
  padding: 0 8px 8px;
  border: 1px solid ${c.line};
  background: ${c.panel};
  &:last-child { margin-bottom: 0; }
`;

const SubHead = styled.button`
  display: flex;
  align-items: center;
  justify-content: space-between;
  width: 100%;
  height: 21px;
  margin-bottom: 8px;
  color: ${c.tealText};
`;

const Palette = styled.div`
  display: grid;
  grid-template-columns: repeat(6, 34px);
  grid-auto-rows: 34px;
  padding: 4px 3px 3px;
  border: 1px solid #cfcfd6;
  background: #fff;
`;

const PaletteButton = styled.button<{ $on?: boolean }>`
  display: flex;
  align-items: center;
  justify-content: center;
  width: 32px;
  height: 32px;
  margin: 1px;
  ${(p) => p.$on && css`
    background: #8cc3d2;
    outline: 1px dotted #000;
    outline-offset: -3px;
  `}
`;

const FieldRow = styled.div`
  display: flex;
  align-items: center;
  justify-content: space-between;
  gap: 2px;
  margin-bottom: 2px;
  &:last-child { margin-bottom: 0; }
`;

const SubtypeBox = styled.span`
  position: relative;
  display: flex;
  align-items: center;
  width: 141px;
  & > svg { position: absolute; right: 5px; pointer-events: none; }
`;

const PickField = styled.button`
  display: flex;
  flex: 1;
  align-items: center;
  gap: 5px;
  height: 32px;
  padding-left: 2px;
  background: ${c.yellow};
`;

const SquareButton = styled.button<{ $pick?: boolean }>`
  display: flex;
  align-items: center;
  justify-content: center;
  width: ${(p) => (p.$pick ? 32 : 24)}px;
  height: ${(p) => (p.$pick ? 32 : 24)}px;
  border: ${(p) => (p.$pick ? '0' : `1px solid ${c.border}`)};
  background: ${(p) => (p.$pick ? c.yellow : '#fff')};
`;

const MoreRow = styled.button`
  display: flex;
  align-items: center;
  justify-content: center;
  width: 316px;
  height: 15px;
  margin: -1px 5px 8px;
  border-bottom: 1px solid #cfcfcf;
`;

const Actions = styled.footer`
  display: flex;
  justify-content: flex-end;
  gap: 5px;
  padding-right: 15px;
`;

const ActionButton = styled.button<{ $primary?: boolean }>`
  width: 54px;
  height: 25px;
  border: 1px solid ${(p) => (p.$primary ? '#74b4ca' : c.border)};
  background: ${(p) => (p.$primary ? '#74b4ca' : c.bar)};
  color: ${(p) => (p.$primary ? '#fff' : 'inherit')};
`;

/* ------------------------------------------------------------------ model */

type Hole = [number, number, number, number];

const leftHoles: Hole[] = [
  [732.7, 516, 6, 9.5], [695, 454.3, 2.3, 3.6], [662, 519, 2.3, 3.6], [704.3, 557.3, 2, 3], [734.3, 451, 1.5, 2.2],
  [756, 426.7, 1.7, 2.3], [758, 454.7, 1.9, 2.5], [792.3, 469.3, 2.3, 3.3], [769, 491.7, 1.6, 2.2], [841, 508.3, 1.8, 2.7],
  [795, 535.7, 2.5, 3.9], [814.7, 560, 1.8, 2.8],
];
const rightHoles: Hole[] = [
  [1144, 421, 1.5, 2.4], [1139, 465, 2.3, 3.6], [1200, 437.3, 1.7, 2.3], [1178, 461.7, 1.6, 2.3], [1202, 465, 1.8, 2.6],
  [1221.7, 463, 1.8, 2.6], [1212.7, 502.7, 1.6, 2.3], [1239.7, 504.3, 1.8, 2.5], [1252.3, 479, 1.9, 2.7],
  [1285, 518.7, 1.8, 2.7], [1239, 546.3, 2.6, 4], [1258.7, 570.7, 1.9, 2.7], [1148.3, 568, 1.8, 2.5],
  [1106.3, 529.3, 2.3, 3.6], [1176.7, 526.7, 6, 9.5], [1176.7, 586.3, 5.6, 8.3], [1232.3, 622.3, 1.9, 2.9],
];
const pins = [
  [793.7, 458.7], [785, 467.3], [827.7, 487.7], [780, 520.3], [764.3, 551],
  [1271.3, 498], [1223.7, 531], [1208.7, 561.3], [1217, 602], [1221, 607],
];
const slots = [[702, 638], [808, 638], [829, 638.5], [782, 689], [803, 690]];
const marks = [[674, 623], [786, 626], [797, 626], [915, 629], [862, 715], [873, 716], [990, 719], [751, 714]];

const Mate = ({ x, y, color }: { x: number; y: number; color: string }) => (
  <g transform={`translate(${x} ${y})`} fill={color} stroke="none">
    <path d="M-7 -5V5L-2 0ZM7 -5V5L2 0Z" />
    <path d="M-0.5 -9H0.5V9H-0.5Z" />
  </g>
);

const Holes = ({ list }: { list: Hole[] }) => (
  <g fill="#d6d7d9" stroke="#2e3234" strokeWidth={1}>
    {list.map(([x, y, rx, ry]) => <ellipse key={`${x}-${y}`} cx={x} cy={y} rx={rx} ry={ry} />)}
  </g>
);

const Model = () => (
  <Scene viewBox="399 192 1167 698" role="img" aria-label="箱体焊合">
    <g stroke="#2e3234" strokeWidth={1} strokeLinejoin="round">
      <path fill="#8fa1a5" d="M706 401L757 394L853 508L845 524Q843 526 841 524L822 502Q817 498 813 502Q808 508 812 518L827 538Q829 541 828 545L820 564L622 562Z" />
      <path fill="#adc2c8" d="M698 401L706 401L623 566L614 567Z" />
      <path fill="none" strokeWidth={1.6} d="M706 402L626 560M706 400.5L734 398" />
      <path fill="#414849" d="M757 394L765 393L860 507L853 508.5Z" />
      <path fill="#adc2c8" d="M626 559L1054 569.5L1052 578L622 567Z" />
      <path fill="#414849" d="M614 567L1052 577L1062 580L1102 637L672 627L746 709L752 722H744Z" />
      <path fill="#8fa1a5" d="M673 627L790 629.5L749 710H746Z" />
      <path fill="#adc2c8" d="M790 629.5L1100 637L1168 719L749 710Z" />
      <path fill="#414849" d="M746 709L1168 719L1180 731L751 720Z" />
      <path fill="#414849" d="M614 567L622 569L752 716V722H744Z" />
      <path fill="none" strokeDasharray="2 1" d="M622 569L747 710" />
      <path fill="#414849" d="M1050 577L1059 578L1188 731L1186 733H1180Z" />
      <path fill="none" d="M1055 580L1184 732" />
      <path fill="#8fa1a5" d="M1141 411L1199 405L1297 519L1289 535Q1287 537 1284 535L1265 513Q1260 509 1256 514Q1252 519 1255 530L1271 549Q1274 552 1272 557L1253 593Q1251 596 1248 593L1232 577L1224 591Q1224 595 1227 593L1232 585L1249 604Q1251 607 1250 610L1188 731L1059 578Z" />
      <path fill="#adc2c8" d="M1134 410L1141 411L1059 578L1050 577Z" />
      <path fill="none" strokeWidth={1.5} d="M1142 412L1060 578M1141 411L1170 408" />
      <path fill="none" stroke="#e4eaec" d="M1140 414L1060 575" />
      <path fill="#414849" d="M1192 403.5L1200 404L1202 407L1192 406Z" />
      <path fill="#d2d3d5" strokeWidth={1.2} d="M1225 467Q1229 466 1230 463Q1236 459 1242 464L1243 468Q1247 468 1248 472L1247 477Q1250 486 1246 493Q1243 497 1239 498L1234 501L1232 497Q1224 493 1224 481Z" />
    </g>
    <Holes list={leftHoles} />
    <Holes list={rightHoles} />
    <g stroke="#2e3234" strokeWidth={1.2}>
      <ellipse cx={734} cy={675.3} rx={6} ry={9.5} fill="#e0e1e3" />
      <ellipse cx={744.7} cy={705.5} rx={2.7} ry={4} fill="#e0e1e3" />
      <ellipse cx={1177.7} cy={685.7} rx={6} ry={9.7} fill="#adc2c8" />
      <ellipse cx={1188.3} cy={716.3} rx={2.8} ry={4.2} fill="#adc2c8" />
    </g>
    <g fill="#2e3234">
      {pins.map(([x, y]) => <ellipse key={`${x}-${y}`} cx={x} cy={y} rx={1.6} ry={2} />)}
    </g>
    <g fill="#c8d4d8" stroke="#2e3234" strokeWidth={1.4}>
      {slots.map(([x, y]) => (
        <rect key={x} x={x - 1.5} y={y - 4} width={3} height={8} rx={1.5} transform={`rotate(25 ${x} ${y})`} />
      ))}
    </g>
    <g fill="#9aa6aa" stroke="#202426" strokeWidth={0.8}>
      {marks.map(([x, y]) => <ellipse key={`${x}-${y}`} cx={x} cy={y} rx={2.2} ry={1.2} />)}
    </g>
    <g fill="none" stroke="#f01010" strokeWidth={1} shapeRendering="crispEdges">
      <path d="M726 497L1131 597" />
      <path d="M854 592L928 547" />
      <path d="M629 584L1078 601" stroke="#a83030" />
      <path d="M629 584L1078 601" strokeDasharray="25 18" strokeWidth={2} />
      <path d="M887 563V577M894 563V577" />
    </g>
    <Mate x={890.5} y={570} color="#f01010" />
    <g fill="none" stroke="#3060d0" strokeWidth={1}>
      <path d="M723 603L698 662M779 611L759 655M749 710L875 686.5M745 717.5H806M629 545L637 564" />
      <path d="M811.500 690V707" />
      <path fill="#3060d0" d="M805 691V698L810 694.5ZM805 700V707L810 703.5Z" />
    </g>
    <Mate x={633} y={554.5} color="#3060d0" />
    <Mate x={710.5} y={632.5} color="#3060d0" />
    <Mate x={768.5} y={632.5} color="#3060d0" />
    <Mate x={775.5} y={717.5} color="#3060d0" />
  </Scene>
);

const Logo = () => (
  <svg width={73} height={83} viewBox="0 0 73 83" aria-hidden="true">
    <g stroke="#eef2f5" strokeWidth={1}>
      <path fill="#cfe6f4" d="M14 14L36.5 0L51 9Q56 16 56 29L36 17Q26 11 14 14Z" />
      <path fill="#88cdf0" d="M51 8L73 21V36Q70 48 57 53V29Q57 18 51 8Z" />
      <path fill="#74bfe6" d="M73 36V63L60 69Q46 70 37 65L57 53Q70 48 73 36Z" />
      <path fill="#74c8f0" d="M37 83L22 74Q16 66 17 54L37 65Q46 70 60 69Z" />
      <path fill="#9cd2ef" d="M0 54Q2 40 16 30V54Q16 66 22 74L0 62Z" />
      <path fill="#b4dcf3" d="M0 21L14 14Q26 11 36 18L16 30Q2 40 0 54Z" />
    </g>
    <path fill="#b4dcf3" d="M37 22L52 31L37 40L21 31Z" />
    <path fill="#9cd2ef" d="M21 32L36.5 41V59L21 50Z" />
    <path fill="#74bfe6" d="M52.5 32L37.5 41V59L52.5 50Z" />
  </svg>
);

/* ------------------------------------------------------------------- data */

const constraints = ['touch', 'concentric', 'distance', 'ground', 'parallel', 'perpendicular', 'align', 'equal', 'fit', 'center', 'angle'];
const jointsTop = ['hinge', 'slider', 'cylindrical', 'ball'];
const jointsBottom = ['gears', 'rack', 'pulley'];
const ribbonTabs = ['形建模', '增材制造设计', '分析', '视图', '渲染', '工具', '应用模块'];
const columnTools = ['close', 'assemblyConstraint', 'eyeOff', 'axes', 'assemblyMove', 'assemblyWindow', 'assemblyHide', 'assemblyAdd', 'boxX', 'plane'];

const pickTools = [
  'faded', 'link', 'filterUndo', 'filterList+', 'bracket', 'tree', 'cubeTarget', 'rectTarget+', 'cubeLine', 'cubePlane', 'snap*',
  'endPoint', 'midPoint', 'control', 'intersect', 'arcCenter', 'quadrant', 'point', 'onCurve', 'onFace', 'boundary', 'facet',
];
const viewTools = ['zoomWindow', 'panWindow', 'rotateWindow', 'cubeDark', 'cubeGear', 'fitWindow+', 'shoe+', 'prism+', 'eyeList+'];

const railItems: { name: string; gap?: boolean; on?: boolean }[] = [
  { name: 'partsGray' }, { name: 'assemblyConstraint', on: true }, { name: 'shoe' }, { name: 'books' },
  { name: 'info', gap: true }, { name: 'web', gap: true }, { name: 'clock', gap: true },
  { name: 'rainbow' }, { name: 'spark' }, { name: 'toolbox' },
];

const Big = ({ icon, label, w, caret, dim }: { icon: string; label: string; w: number; caret?: boolean; dim?: boolean }) => (
  <BigButton $w={w} $dim={dim}>
    <Icon name={icon} size={32} />
    <span>{label}</span>
    {caret && <Caret />}
  </BigButton>
);

const More = ({ icon }: { icon: string }) => (
  <BigButton $w={38}>
    <MoreFace><Icon name={icon} size={18} /></MoreFace>
    <span>更多</span>
    <Caret />
  </BigButton>
);

const Stack = ({ items }: { items: [string, string][] }) => (
  <SmallStack>
    {items.map(([icon, label]) => (
      <SmallButton key={label}><Icon name={icon} />{label}</SmallButton>
    ))}
  </SmallStack>
);

const Foot = ({ label }: { label?: string }) => (
  <GroupFoot>
    <span>{label}</span>
    <button aria-label="组选项"><Caret /></button>
  </GroupFoot>
);

const Tools = ({ items, wide }: { items: string[]; wide?: boolean }) => (
  <>
    {items.map((t) => {
      const name = t.replace(/[+*]/, '');
      return (
        <React.Fragment key={t}>
          <ToolButton $on={t.endsWith('*')} aria-label={name}><Icon name={name} /></ToolButton>
          {t.endsWith('+') && <CaretButton $wide={wide} aria-label="更多选项"><Caret /></CaretButton>}
        </React.Fragment>
      );
    })}
    <BarRule />
  </>
);

const RibbonPanel = () => (
  <Ribbon>
    <RibbonStart><Big icon="sketch" label="草图" w={54} /></RibbonStart>
    <Group $w={184}>
      <GroupBody>
        <TextButton $w={28}><span>特征</span><Caret /></TextButton>
        <Big icon="edgeBlend" label="边倒圆" w={34} caret />
        <Stack items={[['chamfer', '倒斜角'], ['trim', '修剪体'], ['draft', '拔模']]} />
        <More icon="boss" />
      </GroupBody>
      <Foot />
    </Group>
    <Group $w={172}>
      <GroupBody $pad={11}>
        <Big icon="moveFace" label="移动面" w={34} />
        <Stack items={[['offsetFace', '偏置区域'], ['replaceFace', '替换面'], ['deleteFace', '删除面']]} />
        <More icon="refresh" />
      </GroupBody>
      <Foot label="同步建模" />
    </Group>
    <Group $w={52}>
      <GroupBody $pad={4}>
        <IconGrid $col={23}>
          {['gearPairA', 'gearPairB', 'gearList'].map((n) => <GridButton key={n} aria-label="齿轮"><Icon name={n} /></GridButton>)}
        </IconGrid>
      </GroupBody>
      <Foot label="齿轮..." />
    </Group>
    <Group $w={58}>
      <GroupBody $pad={3}>
        <IconGrid $col={24}>
          {['springA', 'springB', 'springC', 'springD'].map((n) => (
            <GridButton key={n} aria-label="弹簧" $rule={n === 'springD'}><Icon name={n} /></GridButton>
          ))}
        </IconGrid>
      </GroupBody>
      <Foot label="弹簧..." />
    </Group>
    <Group $w={43}>
      <GroupBody $pad={5}><Big icon="surface" label="曲面" w={34} caret /></GroupBody>
    </Group>
    <Group $w={181}>
      <GroupBody $pad={12}>
        <Big icon="assemblyPale" label="处理装配" w={44} dim />
        <Big icon="assemblyAdd" label="添加" w={34} caret />
        <Stack items={[['assemblyConstraint', '装配约束'], ['assemblyMove', '移动组件'], ['assemblyPattern', '阵列组件']]} />
      </GroupBody>
      <Foot label="装配" />
    </Group>
    <Group $w={55}>
      <GroupBody $pad={11}><Big icon="measure" label="测量" w={34} /></GroupBody>
      <Foot label="分析" />
    </Group>
    <Group $w={103}>
      <GroupBody $pad={8}>
        <Big icon="emptyBox" label="简单干涉" w={44} />
        <Big icon="split" label="拆分体" w={38} />
      </GroupBody>
    </Group>
  </Ribbon>
);

const ConstraintDialog = () => (
  <Dialog role="dialog" aria-labelledby="dialog-title">
    <DialogHead>
      <Icon name="gearOutline" size={14} />
      <span id="dialog-title">装配约束</span>
      <button aria-label="重置"><Icon name="reset" size={13} /></button>
      <button aria-label="帮助"><Icon name="help" size={13} /></button>
      <button aria-label="关闭"><Icon name="closeBold" size={13} /></button>
    </DialogHead>
    <Section>
      <SectionHead>类型<Chevron /></SectionHead>
      <SubPanel>
        <SubHead>约束<Chevron small /></SubHead>
        <Palette>
          {constraints.map((n) => (
            <PaletteButton key={n} $on={n === 'center'} aria-label={n}><Icon name={n} size={24} /></PaletteButton>
          ))}
        </Palette>
      </SubPanel>
      <SubPanel>
        <SubHead>运动副或耦合副<Chevron small /></SubHead>
        <Palette>
          {jointsTop.map((n) => <PaletteButton key={n} aria-label={n}><Icon name={n} size={24} /></PaletteButton>)}
          <i /><i />
          {jointsBottom.map((n) => <PaletteButton key={n} aria-label={n}><Icon name={n} size={24} /></PaletteButton>)}
        </Palette>
      </SubPanel>
    </Section>
    <Section>
      <SectionHead>要约束的几何体<Chevron /></SectionHead>
      <FieldRow>
        <label htmlFor="subtype">子类型</label>
        <SubtypeBox>
          <Select id="subtype" $h={25} defaultValue="2 对 2"><option>2 对 2</option></Select>
          <Caret big />
        </SubtypeBox>
      </FieldRow>
      <FieldRow>
        <PickField><Icon name="asterisk" size={12} />选择对象 (0)</PickField>
        <SquareButton aria-label="点对话框"><Icon name="pointDialog" size={20} /></SquareButton>
        <SquareButton $pick aria-label="选择点"><Icon name="target" size={20} /></SquareButton>
      </FieldRow>
      <FieldRow>
        <span>撤消上一个约束</span>
        <SquareButton aria-label="撤消上一个约束"><Icon name="reverse" size={20} /></SquareButton>
      </FieldRow>
    </Section>
    <MoreRow aria-label="展开"><Caret big /></MoreRow>
    <Actions>
      <ActionButton $primary>&lt; 确定 &gt;</ActionButton>
      <ActionButton>应用</ActionButton>
      <ActionButton>取消</ActionButton>
    </Actions>
  </Dialog>
);

export default function App() {
  return (
    <Shell>
      <Global />
      <TitleBar>
        <Brand>NX</Brand>
        <QuickAccess>
          <span>窗口</span><WindowBox /><span>窗口</span><Caret /><Caret />
        </QuickAccess>
        <span>NX - 建模</span>
      </TitleBar>
      <TabBar>
        <FileTab>文件</FileTab>
        {ribbonTabs.map((t) => <RibbonTab key={t}>{t}</RibbonTab>)}
      </TabBar>
      <RibbonPanel />
      <SelectionBar>
        <MenuButton><Icon name="menu" size={12} />菜单</MenuButton>
        <FilterBox>
          <Select $h={23} aria-label="选择范围"><option> </option></Select>
          <Caret big />
        </FilterBox>
        <Tools items={pickTools} />
        <Tools items={viewTools} wide />
      </SelectionBar>
      <Body>
        <Rail>
          <RailHead aria-label="设置"><Icon name="gearOutline" size={14} /></RailHead>
          {railItems.map((r) => (
            <RailButton key={r.name} $on={r.on} $gap={r.gap} aria-label={r.name}><Icon name={r.name} size={24} /></RailButton>
          ))}
        </Rail>
        <Navigator><RowGrid><i /><i /><i /><i /><i /><i /></RowGrid></Navigator>
        <ToolColumn>
          {columnTools.map((t) => <ColumnButton key={t} aria-label={t}><Icon name={t} size={24} /></ColumnButton>)}
          <ColumnRule />
        </ToolColumn>
        <Main>
          <DocTabs>
            <DocTab><Icon name="shoe" /><span>覆土机左侧板.prt</span><Icon name="note" size={12} /></DocTab>
            <DocTab $on>
              <Icon name="shoe" /><span>箱体焊合.prt</span><Icon name="note" size={12} />
              <button aria-label="关闭标签"><Icon name="closeBold" size={10} /></button>
            </DocTab>
          </DocTabs>
          <Viewport>
            <Model />
            <Watermark>
              <Logo />
              <MarkText>
                <MarkName>3D<span>世界网</span></MarkName>
                <MarkUrl>WWW.3DSJW.COM</MarkUrl>
              </MarkText>
            </Watermark>
          </Viewport>
        </Main>
      </Body>
      <ConstraintDialog />
    </Shell>
  );
}
